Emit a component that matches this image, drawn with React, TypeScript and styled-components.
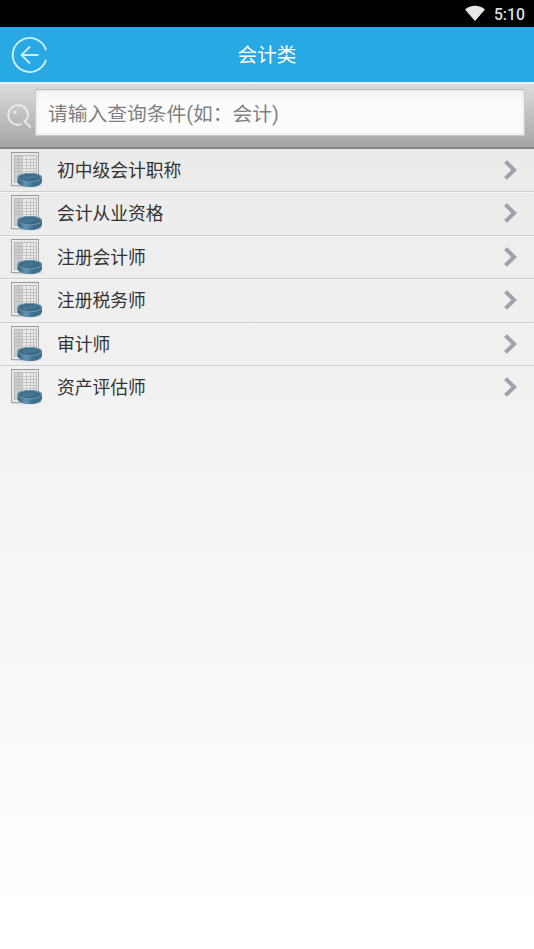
import React from "react";
import styled, { createGlobalStyle } from "styled-components";

const GlobalStyle = createGlobalStyle`
  html, body { margin: 0; padding: 0; }
  body { overflow: hidden; }
  * { box-sizing: border-box; }
`;

const Screen = styled.div`
  display: flex;
  flex-direction: column;
  width: 534px;
  height: 949px;
  background: linear-gradient(to bottom, #ebebeb 148px, #ffffff 915px);
  font-family: Roboto, "Noto Sans CJK SC", sans-serif;
`;

const StatusBar = styled.div`
  display: flex;
  align-items: center;
  justify-content: flex-end;
  flex: none;
  height: 27px;
  padding: 0 9px 0 0;
  gap: 8px;
  background: #000;
`;

const Clock = styled.span`
  color: #dedede;
  font-size: 15.8px;
  font-weight: 500;
  line-height: 27px;
  padding-top: 2px;
`;

const Header = styled.header`
  display: grid;
  grid-template-columns: 60px 1fr 60px;
  align-items: center;
  flex: none;
  height: 55px;
  background: #29a9e3;
`;

const BackButton = styled.button`
  display: flex;
  border: 0;
  margin: 0;
  padding: 0 0 0 10px;
  background: none;
`;

const Title = styled.h1`
  margin: 0;
  padding-top: 3px;
  text-align: center;
  color: #fff;
  font-size: 19.6px;
  font-weight: 400;
  line-height: 52px;
`;

const SearchBar = styled.div`
  display: flex;
  flex: none;
  height: 67px;
  padding: 5px 9px 0 6px;
  border-top: 2px solid #e9f1f4;
  border-bottom: 2px solid #858585;
  background: linear-gradient(to bottom, #dcdcdc, #a5a5a5);
`;

const SearchIcon = styled.svg`
  flex: none;
  margin: 14px 2px 0 0;
`;

const SearchInput = styled.input`
  flex: 1;
  min-width: 0;
  height: 47px;
  padding: 4px 13px 0 12px;
  border: 1px solid #cbcbcb;
  border-top-color: #b8b8b8;
  border-radius: 1px;
  outline: 0;
  background: linear-gradient(to bottom, #f5f5f5, #fcfcfc 30%);
  box-shadow: inset 0 0 4px #dedede;
  font-family: inherit;
  font-size: 19.75px;
  color: #333;
  &::placeholder { color: #808080; opacity: 1; }
`;

const List = styled.ul`
  display: grid;
  grid-auto-rows: 43.55px;
  margin: -0.6px 0 0;
  padding: 0;
  list-style: none;
`;

const Row = styled.li`
  display: flex;
  align-items: center;
  padding: 0 16.5px 0 9px;
  border-bottom: 1px solid #cfcfcf;
  &:not(:first-child) { box-shadow: inset 0 1px 0 #f5f5f5; }
  &:last-child { border-bottom-color: transparent; }
`;

const RowLabel = styled.span`
  flex: 1;
  padding: 3px 0 0 13px;
  color: #333;
  font-size: 17.78px;
  line-height: 39px;
`;

const LedgerSvg = styled.svg`
  flex: none;
`;

const items = [
  "初中级会计职称",
  "会计从业资格",
  "注册会计师",
  "注册税务师",
  "审计师",
  "资产评估师",
];

function LedgerIcon() {
  return (
    <LedgerSvg width="35" height="38" viewBox="0 0 35 38">
      <defs>
        <linearGradient id="coin" x1="0" x2="1" y1="0" y2="0">
          <stop offset="0" stopColor="#315f7e" />
          <stop offset="0.35" stopColor="#6396b4" />
          <stop offset="0.65" stopColor="#3b6d8d" />
          <stop offset="1" stopColor="#426f8c" />
        </linearGradient>
        <linearGradient id="columns" x1="0" x2="1" y1="0" y2="0">
          <stop offset="0" stopColor="#cecece" />
          <stop offset="0.32" stopColor="#cecece" />
          <stop offset="0.4" stopColor="#f0f0f0" />
          <stop offset="1" stopColor="#e8e8e8" />
        </linearGradient>
      </defs>
      <ellipse cx="17" cy="34.5" rx="16" ry="2" fill="#c5c8ca" opacity="0.6" />
      <rect x="2.5" y="1.5" width="27" height="33" fill="#e9e9e9" stroke="#a6a6a6" />
      <path d="M2 1.5H30" stroke="#999" />
      <rect x="5.5" y="4.5" width="22" height="27" fill="url(#columns)" stroke="#b4b4b4" strokeWidth="0.8" />
      <path d="M6 8.5H27M6 11.5H27M6 14.5H27M6 17.5H27M6 20.5H27" stroke="#b7b7b7" strokeWidth="0.7" />
      <path d="M9.5 5V31M13.5 5V31M17.5 5V24M21.5 5V24M24.5 5V24" stroke="#bcbcbc" strokeWidth="0.8" />
      <path d="M8.5 26.5C8.5 20.5 33 20.5 33 26.5V30.5C33 37.8 8.5 37.8 8.5 30.5Z" fill="url(#coin)" />
      <ellipse cx="20.8" cy="26.6" rx="11.5" ry="4.2" fill="#3b6a88" stroke="#7098af" strokeWidth="1" />
      <path d="M12 27C15 23.5 26 23.5 29 25.8L16 29.5Z" fill="#4c7b98" opacity="0.7" />
    </LedgerSvg>
  );
}

function Chevron() {
  return (
    <svg width="14" height="20" viewBox="0 0 14 20">
      <path d="M2.9 3L10.1 10L2.9 17" fill="none" stroke="#a1a1a7" strokeWidth="4" strokeLinecap="square" />
    </svg>
  );
}

export default function App() {
  return (
    <Screen>
      <GlobalStyle />
      <StatusBar>
        <svg width="22" height="17" viewBox="0 0 22 17">
          <path d="M1 4.4C6.8-.4 15.2-.4 21 4.4L11 16Z" fill="#e6e6e6" />
        </svg>
        <Clock>5:10</Clock>
      </StatusBar>
      <Header>
        <BackButton aria-label="返回">
          <svg width="38" height="38" viewBox="0 0 38 38" fill="none" stroke="#d0effb">
            <path d="M36 14.2A17 17 0 1 0 36 23.8" strokeWidth="1.9" />
            <path d="M28.5 19H11.5M20 10.5L11.5 19L20 27.5" strokeWidth="1.8" />
          </svg>
        </BackButton>
        <Title>会计类</Title>
      </Header>
      <SearchBar>
        <SearchIcon width="27" height="27" viewBox="0 0 27 27" fill="none" stroke="#ebebeb">
          <path d="M15.4 21.2A9.8 9.8 0 1 1 21.2 15.6L18.6 18.4L24.7 24.6" strokeWidth="1.9" />
          <circle cx="9" cy="9" r="1.6" fill="#ededed" stroke="none" />
        </SearchIcon>
        <SearchInput placeholder="请输入查询条件(如：会计)" />
      </SearchBar>
      <List>
        {items.map((name) => (
          <Row key={name}>
            <LedgerIcon />
            <RowLabel>{name}</RowLabel>
            <Chevron />
          </Row>
        ))}
      </List>
    </Screen>
  );
}
